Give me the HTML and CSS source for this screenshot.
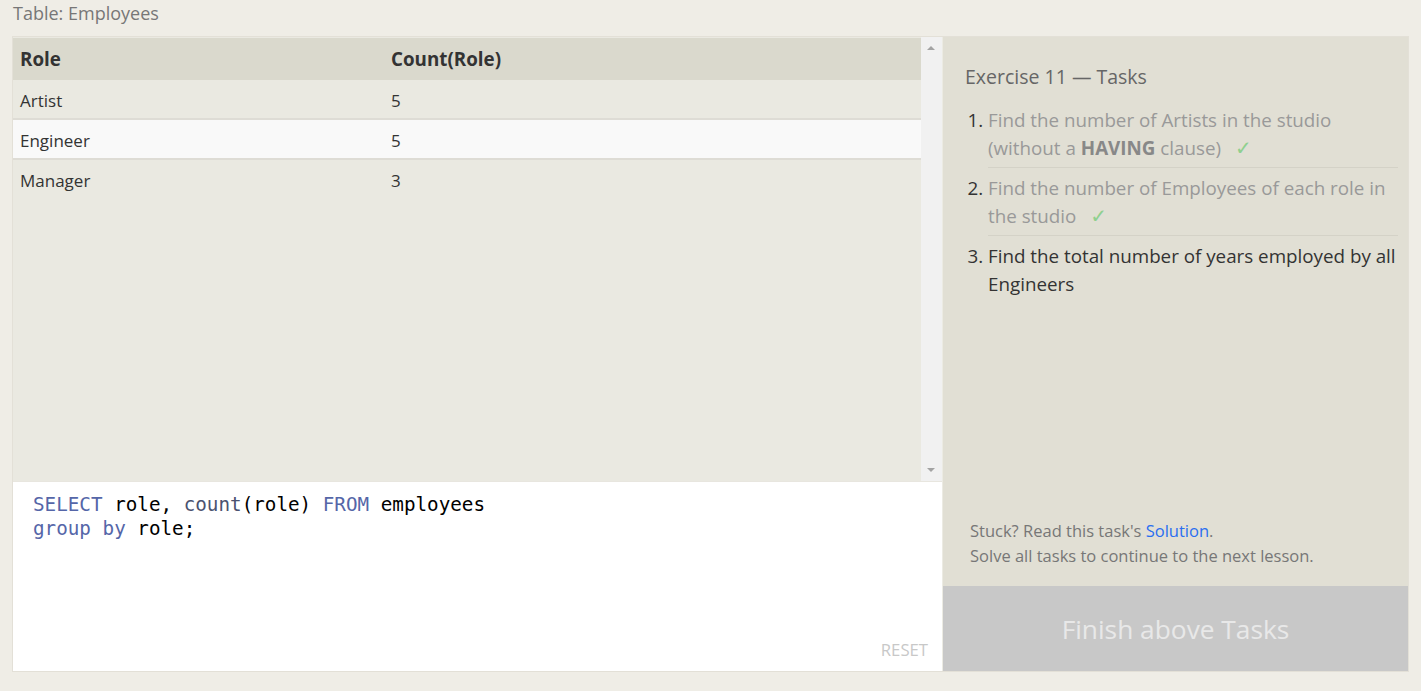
FILE: index.html
```html
<!DOCTYPE html>
<html>
<head>
<meta charset="utf-8">
<link rel="stylesheet" href="styles.css">
</head>
<body>
<div class="caption">Table: Employees</div>
<div class="frame">
  <div class="left">
    <div class="results">
      <div class="table-wrap">
        <table class="data">
          <thead>
            <tr><th class="c1">Role</th><th>Count(Role)</th></tr>
          </thead>
          <tbody>
            <tr><td>Artist</td><td>5</td></tr>
            <tr class="hover"><td>Engineer</td><td>5</td></tr>
            <tr><td>Manager</td><td>3</td></tr>
          </tbody>
        </table>
      </div>
      <div class="scrollbar">
        <span class="arrow up"></span>
        <span class="arrow down"></span>
      </div>
    </div>
    <div class="editor">
      <pre class="code"><span class="kw">SELECT</span> role, <span class="fn">count</span>(role) <span class="kw">FROM</span> employees
<span class="kw">group by</span> role;</pre>
      <div class="reset">RESET</div>
    </div>
  </div>
  <div class="right">
    <div class="tasks">
      <h2 class="title">Exercise 11 — Tasks</h2>
      <ol class="task-list">
        <li class="done"><span class="t">Find the number of Artists in the studio (without a <b>HAVING</b> clause)</span><span class="check">✓</span></li>
        <li class="done"><span class="t">Find the number of Employees of each role in the studio</span><span class="check">✓</span></li>
        <li><span class="t cur">Find the total number of years employed by all Engineers</span></li>
      </ol>
      <div class="spacer"></div>
      <div class="help">
        <div>Stuck? Read this task's <a class="link">Solution</a>.</div>
        <div>Solve all tasks to continue to the next lesson.</div>
      </div>
    </div>
    <div class="finish">Finish above Tasks</div>
  </div>
</div>
</body>
</html>
```
FILE: styles.css
```css
html, body {
  margin: 0;
  padding: 0;
  background: #efede6;
  font-family: "Open Sans", "Noto Sans", sans-serif;
  color: #333;
}
.caption {
  height: 36px;
  box-sizing: border-box;
  padding: 1px 0 0 13px;
  font-size: 18px;
  line-height: 24px;
  color: #777;
}
.frame {
  margin: 0 12px;
  border: 1px solid #e3e0d7;
  display: flex;
  height: 636px;
  box-sizing: border-box;
}
.left {
  width: 929px;
  display: flex;
  flex-direction: column;
}
.results {
  height: 444px;
  display: flex;
  background: #eae9e1;
}
.table-wrap {
  flex: 1;
  padding-top: 1px;
}
.data {
  width: 100%;
  border-collapse: separate;
  border-spacing: 0;
  font-size: 17px;
}
.data th {
  background: #dad9cd;
  text-align: left;
  font-weight: 700;
  font-size: 18.8px;
  height: 42px;
  box-sizing: border-box;
  padding: 0 7px;
  color: #333;
}
.data th.c1 { width: 371px; }
.data td {
  height: 40px;
  box-sizing: border-box;
  padding: 2px 7px 0;
  border-bottom: 2px solid #dedcd5;
  color: #333;
}
.data tbody tr:last-child td { border-bottom: none; padding-top: 0; }
.data tr.hover td { background: #f9f9f9; }
.scrollbar {
  width: 21px;
  background: #f1f1f1;
  position: relative;
}
.arrow {
  position: absolute;
  left: 6px;
  width: 0;
  height: 0;
  border-left: 4px solid transparent;
  border-right: 4px solid transparent;
}
.arrow.up { top: 9px; border-bottom: 4px solid #a3a3a3; }
.arrow.down { bottom: 9px; border-top: 4px solid #a3a3a3; }
.editor {
  flex: 1;
  background: #fff;
  position: relative;
  border-top: 1px solid #e8e6df;
}
.code {
  margin: 0;
  padding: 11px 0 0 20px;
  font-family: "DejaVu Sans Mono", monospace;
  font-size: 19.25px;
  line-height: 24px;
  color: #000;
}
.kw { color: #5566a8; }
.fn { color: #4b5270; }
.reset {
  position: absolute;
  right: 14px;
  bottom: 10px;
  font-size: 16.7px;
  color: #c8c8c8;
}
.right {
  flex: 1;
  display: flex;
  flex-direction: column;
  border-left: 1px solid #ecebe3;
}
.tasks {
  flex: 1;
  background: #e1dfd4;
  padding: 27px 10px 18px 22px;
  display: flex;
  flex-direction: column;
}
.title {
  margin: 0 0 10px;
  font-size: 19.5px;
  line-height: 26px;
  font-weight: 400;
  color: #666;
}
.task-list {
  margin: 0;
  padding-left: 23px;
  font-size: 18.8px;
  line-height: 28px;
}
.task-list li {
  padding: 6px 0 5px;
  border-bottom: 1px solid #d4d2c7;
  color: #333;
}
.task-list li:last-child { border-bottom: none; }
.task-list li.done .t { color: #999; }
.task-list li.done b { color: #888; }
.check {
  color: #8fd08f;
  margin-left: 14px;
  font-family: "DejaVu Sans", sans-serif;
  font-size: 20px;
  line-height: 1;
}
.spacer { flex: 1; }
.help {
  padding-left: 5px;
  font-size: 16.5px;
  line-height: 25px;
  color: #777;
}
.link { color: #2a6ef0; }
.finish {
  height: 85px;
  background: #c8c8c8;
  color: #e8e8e8;
  font-size: 26.3px;
  display: flex;
  align-items: center;
  justify-content: center;
}
```
